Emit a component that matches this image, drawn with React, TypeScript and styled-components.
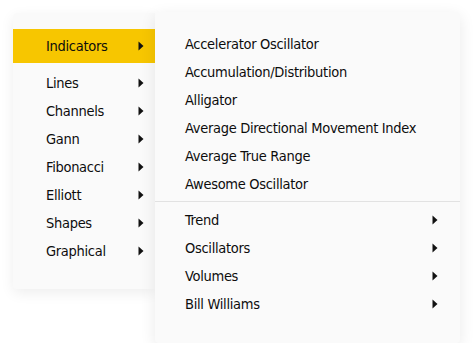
import styled, { createGlobalStyle } from "styled-components";

const GlobalStyle = createGlobalStyle`
  html, body {
    margin: 0;
    padding: 0;
    background: #ffffff;
  }
  body {
    font-family: "DejaVu Sans Condensed", "DejaVu Sans", sans-serif;
    color: #0d0d0d;
  }
`;

const Page = styled.div`
  display: flex;
  align-items: flex-start;
  padding: 12px 0 0 13px;
`;

const MainMenu = styled.ul`
  list-style: none;
  margin: 1px 0 0 0;
  padding: 16px 0 24px 0;
  width: 142px;
  background: #fafafa;
  box-shadow: 0 4px 14px rgba(0, 0, 0, 0.07);
  border-radius: 4px 0 0 4px;
`;

const SubMenu = styled.ul`
  list-style: none;
  margin: 0;
  padding: 18px 0 25px 0;
  width: 305px;
  background: #fafafa;
  box-shadow: 0 4px 16px rgba(0, 0, 0, 0.09);
  border-radius: 4px;
  position: relative;
  z-index: 1;
`;

const Item = styled.li<{ $active?: boolean; $indent: number; $arrowX: number }>`
  display: flex;
  align-items: center;
  justify-content: space-between;
  height: ${({ $active }) => ($active ? "34px" : "28px")};
  margin-bottom: ${({ $active }) => ($active ? "6px" : "0")};
  padding: 0 ${({ $arrowX }) => $arrowX}px 0 ${({ $indent }) => $indent}px;
  background: ${({ $active }) => ($active ? "#f7c600" : "transparent")};
  font-size: 14.5px;
  letter-spacing: -0.3px;
  line-height: 1;
  white-space: nowrap;
`;

const Separator = styled.li`
  height: 1px;
  margin: 3px 0 4px 0;
  background: #e2e2e2;
`;

const Arrow = () => (
  <svg width="6" height="10" viewBox="0 0 6 10">
    <path d="M0.5 0.5 L5.5 5 L0.5 9.5 Z" fill="#111" />
  </svg>
);

const mainItems = ["Lines", "Channels", "Gann", "Fibonacci", "Elliott", "Shapes", "Graphical"];
const indicators = [
  "Accelerator Oscillator",
  "Accumulation/Distribution",
  "Alligator",
  "Average Directional Movement Index",
  "Average True Range",
  "Awesome Oscillator",
];
const groups = ["Trend", "Oscillators", "Volumes", "Bill Williams"];

export default function App() {
  return (
    <>
      <GlobalStyle />
      <Page>
        <MainMenu>
          <Item $active $indent={33} $arrowX={11}>
            Indicators
            <Arrow />
          </Item>
          {mainItems.map((name) => (
            <Item key={name} $indent={33} $arrowX={11}>
              {name}
              <Arrow />
            </Item>
          ))}
        </MainMenu>
        <SubMenu>
          {indicators.map((name) => (
            <Item key={name} $indent={30} $arrowX={22}>
              {name}
            </Item>
          ))}
          <Separator />
          {groups.map((name) => (
            <Item key={name} $indent={30} $arrowX={22}>
              {name}
              <Arrow />
            </Item>
          ))}
        </SubMenu>
      </Page>
    </>
  );
}
